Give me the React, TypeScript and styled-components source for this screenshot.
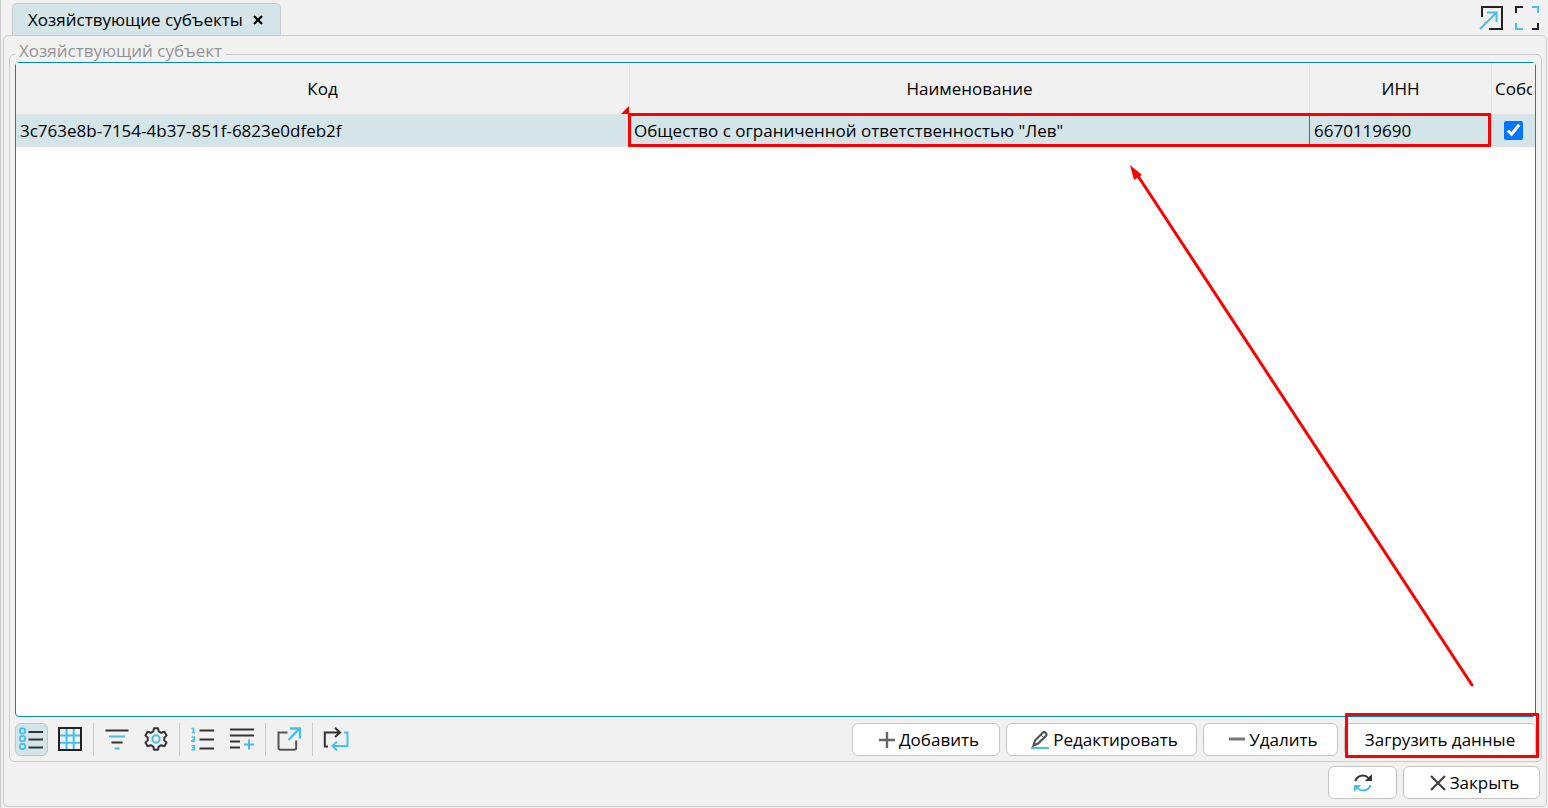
import React from "react";
import styled, { createGlobalStyle } from "styled-components";

const color = {
  page: "#f1f1f1",
  line: "#cbcbcb",
  selected: "#d4e5e9",
  accent: "#0087b4",
  mark: "#ff0000",
  dark: "#333333",
  blue: "#45bfee",
};

const GlobalStyle = createGlobalStyle`
  *, *::before, *::after { box-sizing: border-box; }
  body { margin: 0; background: ${color.page}; }
  body, button, input { font-family: "Open Sans", "Noto Sans", sans-serif; font-size: 17px; color: #000; }
`;

const Page = styled.div`
  display: flex;
  flex-direction: column;
  min-height: 100vh;
  padding: 3px 1px 1px 2px;
  border-left: 1px solid ${color.line};
`;

const TopBar = styled.header`
  display: flex;
  justify-content: space-between;
  height: 32px;
  padding: 0 7px 0 9px;
`;

const Tab = styled.div`
  display: flex;
  align-items: center;
  gap: 4px;
  padding: 0 11px 0 15px;
  background: ${color.selected};
  border: 1px solid ${color.line};
  border-bottom: 0;
  border-radius: 5px 5px 0 0;
  line-height: 24px;
`;

const PlainButton = styled.button`
  display: flex;
  align-items: center;
  justify-content: center;
  padding: 0;
  border: 0;
  background: none;
`;

const TabClose = styled(PlainButton)`
  width: 22px;
  height: 22px;
`;

const WindowActions = styled.div`
  display: flex;
  align-items: center;
  gap: 10px;
  padding-bottom: 2px;
`;

const WindowButton = styled(PlainButton)`
  width: 26px;
  height: 26px;
`;

const Panel = styled.main`
  display: flex;
  flex: 1;
  flex-direction: column;
  padding: 18px 4px 7px 5px;
  border: 1px solid ${color.line};
  border-radius: 5px;
`;

const Group = styled.section`
  display: flex;
  flex: 1;
  flex-direction: column;
  padding: 0 5px 5px;
  border: 1px solid ${color.line};
  border-radius: 5px;
`;

const GroupTitle = styled.h2`
  align-self: flex-start;
  margin: -9px 0 0;
  padding: 0 4px 6px;
  background: ${color.page};
  color: #949494;
  font-size: 17px;
  font-weight: 400;
  line-height: 10px;
`;

const GridFrame = styled.div`
  position: relative;
  flex: 1;
  background: #fff;
  border: 1px solid ${color.accent};
  border-radius: 4px;
`;

const Table = styled.table`
  width: 100%;
  table-layout: fixed;
  border-collapse: separate;
  border-spacing: 0;
`;

const Column = styled.col<{ $width?: number }>`
  width: ${(p) => (p.$width ? `${p.$width}px` : "auto")};
`;

const HeadCell = styled.th<{ $last?: boolean }>`
  position: relative;
  height: 52px;
  padding: 0 ${(p) => (p.$last ? "3px" : "4px")};
  background: ${color.page};
  border-right: ${(p) => (p.$last ? "0" : "1px solid #e2e2e2")};
  border-bottom: 1px solid #e2e2e2;
  font-weight: 400;
  text-align: ${(p) => (p.$last ? "left" : "center")};
  white-space: nowrap;
`;

const ClippedLabel = styled.span`
  display: block;
  overflow: hidden;
`;

const CornerMark = styled.span`
  position: absolute;
  right: 0;
  bottom: 0;
  border-left: 8px solid transparent;
  border-bottom: 8px solid ${color.mark};
`;

const Cell = styled.td<{ $divider?: boolean; $center?: boolean }>`
  position: relative;
  height: 32px;
  padding: 0 4px;
  background: ${color.selected};
  border-right: 1px solid ${(p) => (p.$divider ? color.accent : color.selected)};
  border-bottom: 1px solid #e2e2e2;
  text-align: ${(p) => (p.$center ? "center" : "left")};
  white-space: nowrap;
`;

const RowHighlight = styled.span`
  position: absolute;
  top: -2px;
  bottom: -1px;
  left: -2px;
  width: calc(100% + 184px);
  border: 3px solid ${color.mark};
  border-radius: 1px;
  z-index: 1;
`;

const Check = styled.input`
  display: block;
  width: 19px;
  height: 19px;
  margin: 0 auto;
  accent-color: #0075ff;
`;

const Arrow = styled.svg`
  position: absolute;
  right: 59px;
  bottom: 27px;
  width: 346px;
  height: 525px;
`;

const Toolbar = styled.div`
  display: flex;
  align-items: center;
  justify-content: space-between;
  padding-top: 6px;
`;

const ToolGroup = styled.div`
  display: flex;
  align-items: center;
  gap: 6px;
`;

const ToolButton = styled(PlainButton)<{ $active?: boolean }>`
  width: 33px;
  height: 33px;
  padding: 0 1px 1px 0;
  background: ${(p) => (p.$active ? color.selected : "none")};
  border: 1px solid ${(p) => (p.$active ? "#c4c4c4" : "transparent")};
  border-radius: 6px;
`;

const Separator = styled.span`
  width: 2px;
  height: 33px;
  border-left: 1px solid ${color.line};
`;

const ActionButton = styled.button<{ $width: number; $icon?: boolean }>`
  display: flex;
  align-items: center;
  justify-content: center;
  gap: 4px;
  min-width: ${(p) => p.$width}px;
  height: 33px;
  padding: 0 8px 0 ${(p) => (p.$icon ? "14px" : "8px")};
  background: #fff;
  border: 1px solid #c4c4c4;
  border-radius: 6px;
  white-space: nowrap;
`;

const Marked = styled.div`
  position: relative;
  &::after {
    content: "";
    position: absolute;
    inset: -10px -3px -2px 1px;
    border: 3px solid ${color.mark};
    border-radius: 1px;
    pointer-events: none;
  }
`;

const Footer = styled.footer`
  display: flex;
  justify-content: flex-end;
  gap: 6px;
  padding: 4px 2px 0;
`;

type IconProps = { children: React.ReactNode; w?: number; h?: number };

const Icon = ({ children, w = 24, h = 24 }: IconProps) => (
  <svg width={w} height={h} viewBox={`0 0 ${w} ${h}`} fill="none" stroke={color.dark} strokeWidth="2" aria-hidden="true">
    {children}
  </svg>
);

const PopOutIcon = () => (
  <Icon>
    <path d="M3 11V1H23V23H10" stroke="#222" />
    <path d="M1 23L17 7M8 6.5H17.5V16" stroke={color.blue} />
  </Icon>
);

const FullScreenIcon = () => (
  <Icon>
    <path d="M1 7V1H8M23 17V23H17" stroke="#222" />
    <path d="M17 1H23V7M1 17V23H8" stroke={color.blue} />
  </Icon>
);

const ListIcon = () => (
  <Icon>
    <g stroke={color.blue} strokeWidth="1.8">
      <rect x="1" y="1.5" width="5" height="5" rx="1.5" />
      <rect x="1" y="9.2" width="5" height="5" rx="1.5" />
      <rect x="1" y="17" width="5" height="5" rx="1.5" />
    </g>
    <path d="M9.5 5H24M9.5 12.5H24M9.5 20.5H24" />
  </Icon>
);

const GridIcon = () => (
  <Icon>
    <path d="M8.5 1V23M15.7 1V23M1 8.5H23M1 15.7H23" stroke={color.blue} />
    <rect x="1" y="1" width="22" height="22" stroke="#222" />
  </Icon>
);

const FilterIcon = () => (
  <Icon>
    <path d="M.5 3.5H23.5M6.5 15.5H17.5" />
    <path d="M4 9.5H20M9.5 21.5H14.5" stroke={color.blue} />
  </Icon>
);

const GearIcon = () => (
  <Icon>
    <path
      d="M10 1.2H14L14.7 4.4L17.2 5.8L20.4 4.8L22.6 8.4L20.3 10.6V13.4L22.6 15.6L20.4 19.2L17.2 18.2L14.7 19.6L14 22.8H10L9.3 19.6L6.8 18.2L3.6 19.2L1.4 15.6L3.7 13.4V10.6L1.4 8.4L3.6 4.8L6.8 5.8L9.3 4.4Z"
      strokeLinejoin="round"
    />
    <circle cx="12" cy="12" r="3.7" stroke={color.blue} />
  </Icon>
);

const NumberedIcon = () => (
  <Icon>
    <g stroke={color.blue} strokeWidth="1.6">
      <path d="M.5 1.5H2.5V5.5M.8 5.5H4" />
      <path d="M.5 10H3.2V12.2L.8 14.2H4" />
      <path d="M.5 18.8H3.3V22.7H.5M1.3 20.7H3.3" />
    </g>
    <path d="M8.5 3.5H23M8.5 12.5H23M8.5 21.5H23" />
  </Icon>
);

const AddLineIcon = () => (
  <Icon>
    <path d="M0 2.5H24M0 8.5H24M0 14.5H10M0 20.5H10" />
    <path d="M19 12.5V22.5M14 17.5H24" stroke={color.blue} />
  </Icon>
);

const ExportIcon = () => (
  <Icon>
    <path d="M10.5 5.5H1.5V20.5Q1.5 22.8 3.8 22.8H17Q19.2 22.8 19.2 20.5V13.5" stroke="#555" />
    <path d="M11.5 13L21.5 2.5M13 1.5H23V11.5" stroke={color.blue} strokeWidth="2.4" />
  </Icon>
);

const SwapIcon = () => (
  <Icon w={26}>
    <path d="M5 19.5H1.8V5.5H17M12 .8L17 5.5L12 10" />
    <path d="M21 5.5H24.5V19H10M14 14.5L9.5 19L14 23.5" stroke={color.blue} />
  </Icon>
);

const PlusIcon = () => (
  <Icon w={16} h={16}>
    <path d="M8 0V16M0 8H16" stroke="#666" strokeWidth="2.4" />
  </Icon>
);

const MinusIcon = () => (
  <Icon w={16} h={16}>
    <path d="M0 7H16" stroke="#777" strokeWidth="3" />
  </Icon>
);

const PencilIcon = () => (
  <Icon w={18} h={18}>
    <path d="M2.5 14.5L4 9.5L12 1.5Q13 .5 14.2 1.5L15 2.3Q16 3.5 15 4.7L7 12.5Z" stroke="#555" strokeWidth="2.2" />
    <path d="M10 4L13 7" stroke="#555" strokeWidth="1" />
    <path d="M0 17H18" stroke={color.blue} />
  </Icon>
);

const CrossIcon = () => (
  <Icon w={16} h={16}>
    <path d="M1 1L15 15M15 1L1 15" stroke="#444" strokeWidth="2.2" />
  </Icon>
);

const RefreshIcon = () => (
  <Icon w={18} h={18}>
    <path d="M1.2 7Q3.5 1.5 9 1.5Q12.5 1.5 14.5 4" />
    <path d="M18 0V7H10.8Z" fill={color.dark} stroke="none" />
    <path d="M16.8 11Q14.5 16.5 9 16.5Q5.5 16.5 3.5 14" stroke={color.blue} />
    <path d="M0 18V11H7.2Z" fill={color.blue} stroke="none" />
  </Icon>
);

const CloseTabIcon = () => (
  <Icon w={10} h={10}>
    <path d="M1 1L9 9M9 1L1 9" stroke="#000" strokeWidth="2.2" />
  </Icon>
);

export default function App() {
  return (
    <>
      <GlobalStyle />
      <Page>
        <TopBar>
          <Tab>
            Хозяйствующие субъекты
            <TabClose aria-label="Закрыть вкладку"><CloseTabIcon /></TabClose>
          </Tab>
          <WindowActions>
            <WindowButton aria-label="Открыть в окне"><PopOutIcon /></WindowButton>
            <WindowButton aria-label="Во весь экран"><FullScreenIcon /></WindowButton>
          </WindowActions>
        </TopBar>
        <Panel>
          <Group aria-labelledby="group-title">
            <GroupTitle id="group-title">Хозяйствующий субъект</GroupTitle>
            <GridFrame>
              <Table>
                <colgroup>
                  <Column $width={614} />
                  <Column />
                  <Column $width={182} />
                  <Column $width={43} />
                </colgroup>
                <thead>
                  <tr>
                    <HeadCell>Код<CornerMark /></HeadCell>
                    <HeadCell>Наименование</HeadCell>
                    <HeadCell>ИНН</HeadCell>
                    <HeadCell $last><ClippedLabel>Собс</ClippedLabel></HeadCell>
                  </tr>
                </thead>
                <tbody>
                  <tr>
                    <Cell>3c763e8b-7154-4b37-851f-6823e0dfeb2f</Cell>
                    <Cell $divider>
                      Общество с ограниченной ответственностью "Лев"
                      <RowHighlight />
                    </Cell>
                    <Cell>6670119690</Cell>
                    <Cell $center><Check type="checkbox" defaultChecked aria-label="Собс" /></Cell>
                  </tr>
                </tbody>
              </Table>
              <Arrow viewBox="0 0 346 525" aria-hidden="true">
                <path d="M8 12L342 521" stroke={color.mark} strokeWidth="3" strokeLinecap="round" />
                <path d="M0 1L12 11L4 16Z" fill={color.mark} />
              </Arrow>
            </GridFrame>
            <Toolbar>
              <ToolGroup>
                <ToolButton $active aria-label="Список"><ListIcon /></ToolButton>
                <ToolButton aria-label="Таблица"><GridIcon /></ToolButton>
                <Separator />
                <ToolButton aria-label="Фильтр"><FilterIcon /></ToolButton>
                <ToolButton aria-label="Настройки"><GearIcon /></ToolButton>
                <Separator />
                <ToolButton aria-label="Нумерация"><NumberedIcon /></ToolButton>
                <ToolButton aria-label="Добавить строку"><AddLineIcon /></ToolButton>
                <Separator />
                <ToolButton aria-label="Экспорт"><ExportIcon /></ToolButton>
                <Separator />
                <ToolButton aria-label="Обновить список"><SwapIcon /></ToolButton>
              </ToolGroup>
              <ToolGroup>
                <ActionButton $width={148} $icon><PlusIcon />Добавить</ActionButton>
                <ActionButton $width={191} $icon><PencilIcon />Редактировать</ActionButton>
                <ActionButton $width={135} $icon><MinusIcon />Удалить</ActionButton>
                <Marked><ActionButton $width={192}>Загрузить данные</ActionButton></Marked>
              </ToolGroup>
            </Toolbar>
          </Group>
          <Footer>
            <ActionButton $width={69} aria-label="Обновить"><RefreshIcon /></ActionButton>
            <ActionButton $width={137} $icon><CrossIcon />Закрыть</ActionButton>
          </Footer>
        </Panel>
      </Page>
    </>
  );
}
